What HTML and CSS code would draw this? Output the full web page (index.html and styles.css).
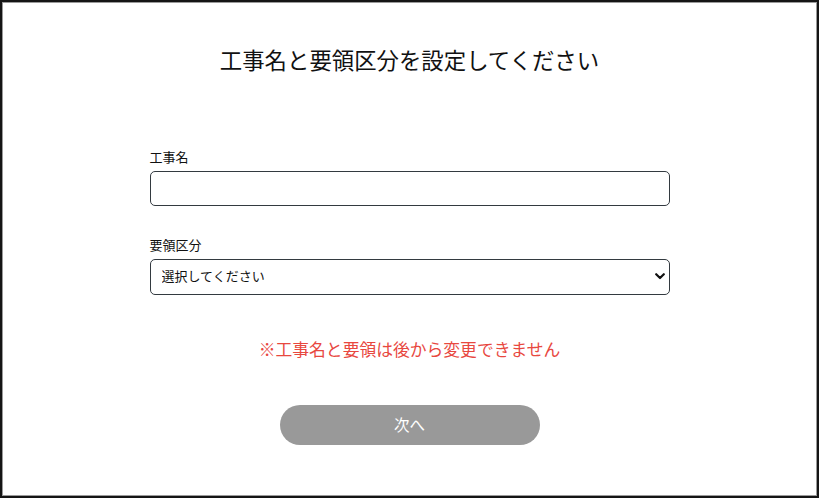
FILE: index.html
```html
<!DOCTYPE html>
<html lang="ja">
<head>
<meta charset="utf-8">
<title>工事名と要領区分</title>
<link rel="stylesheet" href="styles.css">
</head>
<body>
<div class="frame">
  <h1 class="title">工事名と要領区分を設定してください</h1>
  <form class="form">
    <div class="field">
      <label class="label" for="name">工事名</label>
      <input class="input" id="name" type="text">
    </div>
    <div class="field field-second">
      <label class="label" for="kind">要領区分</label>
      <div class="select-wrap">
        <select class="select" id="kind">
          <option>選択してください</option>
        </select>
        <svg class="chevron" width="10" height="7" viewBox="0 0 10 7"><path d="M1.2 1.2 L5 5 L8.8 1.2" fill="none" stroke="#111" stroke-width="2.2" stroke-linecap="round" stroke-linejoin="round"/></svg>
      </div>
    </div>
    <p class="warning">※工事名と要領は後から変更できません</p>
    <div class="actions">
      <button type="button" class="next">次へ</button>
    </div>
  </form>
</div>
</body>
</html>
```
FILE: styles.css
```css
html, body {
  margin: 0;
  padding: 0;
  background: #ffffff;
}
body {
  font-family: "Noto Sans CJK JP", "Noto Sans", sans-serif;
  color: #111;
}
.frame {
  box-sizing: border-box;
  width: 819px;
  height: 498px;
  border: 2px solid #151515;
  box-shadow: inset 0 0 0 1px #9a9a9a;
  display: flex;
  flex-direction: column;
  align-items: center;
}
.title {
  margin: 41px 0 0;
  font-size: 22.4px;
  line-height: 32px;
  font-weight: 400;
  color: #111;
  letter-spacing: 0;
}
.form {
  width: 520px;
  margin-top: 73px;
  display: flex;
  flex-direction: column;
}
.field {
  display: flex;
  flex-direction: column;
}
.field-second {
  margin-top: 30px;
}
.label {
  font-size: 13px;
  line-height: 18px;
  margin-bottom: 5px;
  color: #111;
}
.input, .select {
  box-sizing: border-box;
  width: 520px;
  height: 35px;
  border: 1px solid #333a40;
  border-radius: 5px;
  background: #fff;
  font-family: inherit;
  font-size: 13px;
  color: #111;
  outline: none;
}
.select-wrap {
  position: relative;
}
.select {
  -webkit-appearance: none;
  appearance: none;
  padding: 0 0 3px 11px;
  height: 36px;
}
.chevron {
  position: absolute;
  right: 5px;
  top: 14px;
  pointer-events: none;
}
.warning {
  margin: 42px 0 0;
  text-align: center;
  font-size: 16.8px;
  line-height: 24px;
  color: #e8483f;
}
.actions {
  margin-top: 44px;
  display: flex;
  justify-content: center;
}
.next {
  width: 260px;
  height: 40px;
  border: none;
  border-radius: 20px;
  background: #999999;
  color: #ffffff;
  font-family: inherit;
  font-size: 15.5px;
  padding: 0 0 2px;
}
```
